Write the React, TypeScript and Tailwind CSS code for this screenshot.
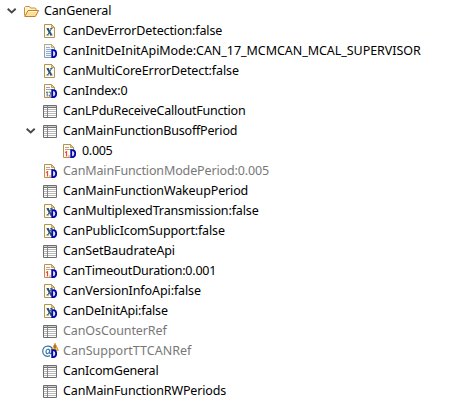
type Kind = 'bool' | 'boolD' | 'enumD' | 'intD' | 'floatD' | 'table' | 'refD' | 'folder';

interface Row {
  label: string;
  kind: Kind;
  level: 0 | 1 | 2;
  tracking: string;
  open?: boolean;
  muted?: boolean;
}

const rows: Row[] = [
  { label: 'CanGeneral', kind: 'folder', level: 0, tracking: 'tracking-[-0.15px]', open: true },
  { label: 'CanDevErrorDetection:false', kind: 'bool', level: 1, tracking: 'tracking-[-0.12px]' },
  { label: 'CanInitDeInitApiMode:CAN_17_MCMCAN_MCAL_SUPERVISOR', kind: 'enumD', level: 1, tracking: 'tracking-[-0.05px]' },
  { label: 'CanMultiCoreErrorDetect:false', kind: 'bool', level: 1, tracking: 'tracking-[-0.11px]' },
  { label: 'CanIndex:0', kind: 'intD', level: 1, tracking: 'tracking-[-0.18px]' },
  { label: 'CanLPduReceiveCalloutFunction', kind: 'table', level: 1, tracking: 'tracking-[-0.22px]' },
  { label: 'CanMainFunctionBusoffPeriod', kind: 'table', level: 1, tracking: 'tracking-[-0.18px]', open: true },
  { label: '0.005', kind: 'floatD', level: 2, tracking: 'tracking-[-0.3px]' },
  { label: 'CanMainFunctionModePeriod:0.005', kind: 'floatD', level: 1, tracking: 'tracking-[-0.13px]', muted: true },
  { label: 'CanMainFunctionWakeupPeriod', kind: 'table', level: 1, tracking: 'tracking-[-0.13px]' },
  { label: 'CanMultiplexedTransmission:false', kind: 'boolD', level: 1, tracking: 'tracking-[-0.13px]' },
  { label: 'CanPublicIcomSupport:false', kind: 'boolD', level: 1, tracking: 'tracking-[-0.15px]' },
  { label: 'CanSetBaudrateApi', kind: 'table', level: 1, tracking: 'tracking-[-0.12px]' },
  { label: 'CanTimeoutDuration:0.001', kind: 'floatD', level: 1, tracking: 'tracking-[-0.22px]' },
  { label: 'CanVersionInfoApi:false', kind: 'boolD', level: 1, tracking: 'tracking-[-0.1px]' },
  { label: 'CanDeInitApi:false', kind: 'boolD', level: 1, tracking: 'tracking-[-0.2px]' },
  { label: 'CanOsCounterRef', kind: 'table', level: 1, tracking: 'tracking-[-0.1px]', muted: true },
  { label: 'CanSupportTTCANRef', kind: 'refD', level: 1, tracking: 'tracking-[0px]', muted: true },
  { label: 'CanIcomGeneral', kind: 'table', level: 1, tracking: 'tracking-[-0.2px]' },
  { label: 'CanMainFunctionRWPeriods', kind: 'table', level: 1, tracking: 'tracking-[-0.14px]' },
];

const indent = { 0: 'pl-[4px]', 1: 'pl-[23px]', 2: 'pl-[42px]' };

function Badge() {
  return (
    <path d="M10.2 7.2h1c2.1 0 3 1.4 3 3.4s-.9 3.5-3 3.5h-1z" fill="#dfe5fa" stroke="#0808a8" strokeWidth="1.8" />
  );
}

function Page() {
  return (
    <>
      <path d="M2.5 1.5h7l3 3v10h-10z" fill="#fdfbee" stroke="#b3934f" />
      <path d="M9.5 1.5v3h3z" fill="#e4c98a" stroke="#b3934f" strokeWidth=".8" />
    </>
  );
}

function Icon({ kind }: { kind: Kind }) {
  return (
    <svg viewBox="0 0 16 16" className="h-4 w-4 shrink-0 overflow-visible">
      {kind === 'folder' && (
        <>
          <path d="M1.5 12.5v-8l1-1h4l1 1.5h4.8l.7.8V8" fill="#fff4c8" stroke="#c58f3e" />
          <path d="M1.8 13.5 5 7.5h10.7l-3.4 6z" fill="#fbdf9b" stroke="#bd812f" strokeLinejoin="round" />
          <path d="M5.6 8.5h8.4" stroke="#fff3c9" />
        </>
      )}
      {kind === 'table' && (
        <>
          <path d="M1.5 2.5h13v12h-13z" fill="#fff" stroke="#6e6e6e" />
          <path d="M2 3.5h12" stroke="#d0d0d0" />
          <path d="M1 4.5h14" stroke="#707070" />
          <path d="M2 6.5h12M2 8.5h12M2 10.5h12M2 12.5h12" stroke="#b8b8b8" />
          <path d="M5.5 3v11" stroke="#858585" />
        </>
      )}
      {(kind === 'bool' || kind === 'boolD') && (
        <>
          <Page />
          <path d="M5.5 5.5 9.3 12" stroke="#1f456e" strokeWidth="1.9" />
          <path d="M9.6 5.5 5.6 12M4.6 5.5h2.3M8.3 5.5h2.2M4.5 12h2.2M8 12h2.5" stroke="#2f5a86" />
        </>
      )}
      {kind === 'enumD' && (
        <>
          <path d="M2.5 1.5h7l3 3v10h-10z" fill="#f1f6ff" stroke="#8e99a8" />
          <path d="M2.5 8V1.5h7l3 3" fill="none" stroke="#bda976" />
          <path d="M9.5 1.5v3h3z" fill="#e6d8aa" stroke="#b9a168" strokeWidth=".8" />
          <path d="M4 4.5h4M4 6.5h7M4 8.5h5M4 10.5h5M4 12.5h5" stroke="#8caedb" />
        </>
      )}
      {kind === 'intD' && (
        <>
          <Page />
          <path d="M4 4.5h4M4 6.5h7" stroke="#8fa5c0" />
          <path d="m4 9.6 1.2-.8v4.7M6.7 9.2h2v1.9l-1.9 1.9H9" fill="none" stroke="#45658f" />
        </>
      )}
      {kind === 'floatD' && (
        <>
          <Page />
          <path d="M4 4.5h4M4 6.5h7" stroke="#b9a79c" />
          <path d="m4 9.6 1.5-.9v4.8M7.3 13h1.3" fill="none" stroke="#f04448" strokeWidth="1.2" />
        </>
      )}
      {kind === 'refD' && (
        <>
          <path
            d="M8 12.6C4.6 14.4.7 12.2.7 8.4.7 5.2 2.9 3 5.8 3c3 0 4.6 2 4.6 4.5 0 2-1 3-2 3-1.2 0-.9-1.5-.5-4.2M7.6 8c-.3 3.1-3.6 3.5-3.6.8 0-2.9 3.4-3.6 3.6-.8z"
            fill="none"
            stroke="#3977a8"
            strokeWidth="1.25"
          />
          <path d="m13 .3 3.3 7H9.7z" fill="#f7c566" stroke="#d9912d" strokeLinejoin="round" />
          <path d="M13 2.3v2.6M13 5.6v1.1" stroke="#5b3708" strokeWidth="1.1" />
        </>
      )}
      {kind.endsWith('D') && <Badge />}
    </svg>
  );
}

export default function App() {
  return (
    <main className="h-[401px] w-[450px] overflow-hidden bg-white pt-px font-['Noto_Sans',sans-serif] text-[12.5px]">
      {rows.map((row) => (
        <div key={row.label} className={`flex h-5 items-center whitespace-nowrap ${indent[row.level]}`}>
          <span className="flex w-[19px] shrink-0 items-center">
            {row.open && (
              <svg viewBox="0 0 16 16" className="h-4 w-4" fill="none">
                <path d="m3.7 5.7 4 3.8 4-3.8" stroke="#484848" strokeWidth="1.9" />
              </svg>
            )}
          </span>
          <Icon kind={row.kind} />
          <span className={`ml-[5px] leading-5 ${row.tracking} ${row.muted ? 'text-[#787878]' : 'text-black'}`}>
            {row.label}
          </span>
        </div>
      ))}
    </main>
  );
}
